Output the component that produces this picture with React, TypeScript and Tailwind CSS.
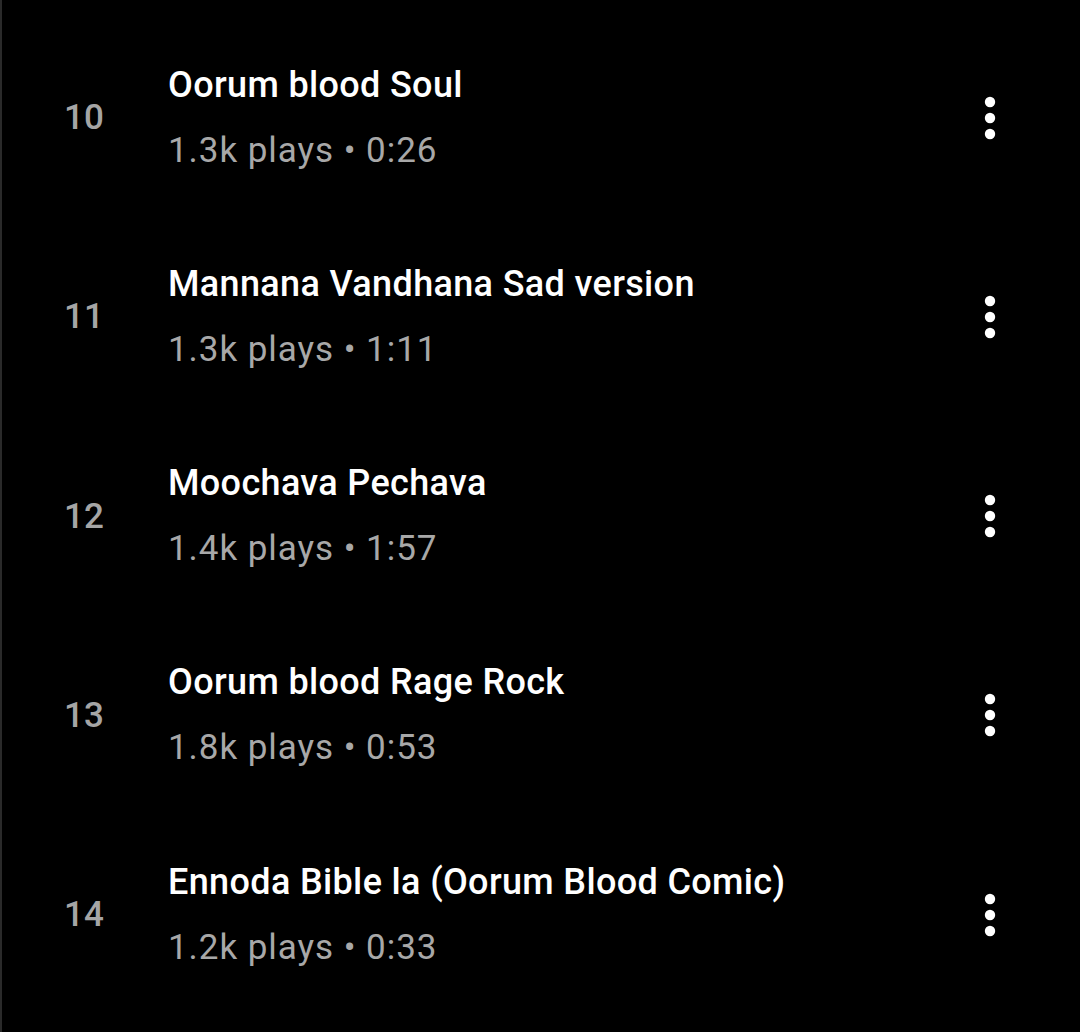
import React from "react";

const tracks = [
  { n: 10, title: "Oorum blood Soul", plays: "1.3k", dur: "0:26" },
  { n: 11, title: "Mannana Vandhana Sad version", plays: "1.3k", dur: "1:11" },
  { n: 12, title: "Moochava Pechava", plays: "1.4k", dur: "1:57" },
  { n: 13, title: "Oorum blood Rage Rock", plays: "1.8k", dur: "0:53" },
  { n: 14, title: "Ennoda Bible la (Oorum Blood Comic)", plays: "1.2k", dur: "0:33" },
];

function Dots() {
  return (
    <svg width="12" height="44" viewBox="0 0 12 44" fill="#ffffff">
      <circle cx="6" cy="6" r="5.2" />
      <circle cx="6" cy="22" r="5.2" />
      <circle cx="6" cy="38" r="5.2" />
    </svg>
  );
}

export default function App() {
  return (
    <div
      className="w-[1080px] h-[1032px] bg-black border-l-2 border-[#2a2a2a] overflow-hidden pt-[18px]"
      style={{ fontFamily: "Roboto, 'Noto Sans', sans-serif" }}
    >
      {tracks.map((t) => (
        <div key={t.n} className="flex items-center h-[199.25px]">
          <div className="w-[166px] pl-[62px] text-[35px] font-medium text-[#a5a5a5] leading-none">
            {t.n}
          </div>
          <div className="flex flex-col gap-[26px]">
            <div className="text-[36px] font-medium text-white leading-[40px] tracking-[0.35px] whitespace-nowrap">
              {t.title}
            </div>
            <div className="text-[35px] text-[#a8a8a8] leading-[40px] tracking-[0.95px] whitespace-nowrap">
              {t.plays} plays • {t.dur}
            </div>
          </div>
          <div className="ml-auto mr-[84px] flex items-center">
            <Dots />
          </div>
        </div>
      ))}
    </div>
  );
}
